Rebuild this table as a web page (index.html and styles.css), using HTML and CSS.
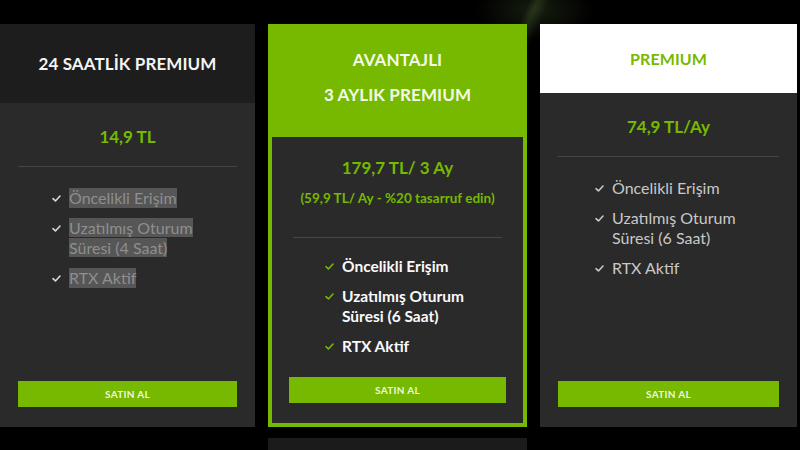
FILE: index.html
```html
<!DOCTYPE html>
<html lang="tr">
<head>
<meta charset="utf-8">
<title>Premium Planlar</title>
<link rel="stylesheet" href="styles.css">
</head>
<body>
<main class="plans">
  <section class="card card-basic">
    <header class="card-head head-dark">
      <h2 class="title">24 SAATLİK PREMIUM</h2>
    </header>
    <div class="card-body">
      <p class="price">14,9 TL</p>
      <hr class="divider">
      <ul class="features features-muted">
        <li><svg class="check" viewBox="0 0 10 8"><path d="M1 4.2 L3.8 6.8 L9 1.2"/></svg><span class="hl">Öncelikli Erişim</span></li>
        <li><svg class="check" viewBox="0 0 10 8"><path d="M1 4.2 L3.8 6.8 L9 1.2"/></svg><span class="txt"><span class="hl">Uzatılmış Oturum Süresi (4 Saat)</span></span></li>
        <li><svg class="check" viewBox="0 0 10 8"><path d="M1 4.2 L3.8 6.8 L9 1.2"/></svg><span class="hl">RTX Aktif</span></li>
      </ul>
      <a class="buy" href="#">SATIN AL</a>
    </div>
  </section>

  <div class="featured-col">
    <section class="card card-featured">
      <header class="card-head head-green">
        <h2 class="title">AVANTAJLI</h2>
        <h2 class="title">3 AYLIK PREMIUM</h2>
      </header>
      <div class="card-body inner">
        <p class="price">179,7 TL/ 3 Ay</p>
        <p class="saving">(59,9 TL/ Ay - %20 tasarruf edin)</p>
        <hr class="divider">
        <ul class="features features-strong">
          <li><svg class="check" viewBox="0 0 10 8"><path d="M1 4.2 L3.8 6.8 L9 1.2"/></svg><span>Öncelikli Erişim</span></li>
          <li><svg class="check" viewBox="0 0 10 8"><path d="M1 4.2 L3.8 6.8 L9 1.2"/></svg><span>Uzatılmış Oturum Süresi (6 Saat)</span></li>
          <li><svg class="check" viewBox="0 0 10 8"><path d="M1 4.2 L3.8 6.8 L9 1.2"/></svg><span>RTX Aktif</span></li>
        </ul>
        <a class="buy" href="#">SATIN AL</a>
      </div>
    </section>
    <div class="next-block"></div>
  </div>

  <section class="card card-premium">
    <header class="card-head head-white">
      <h2 class="title">PREMIUM</h2>
    </header>
    <div class="card-body">
      <p class="price">74,9 TL/Ay</p>
      <hr class="divider">
      <ul class="features features-light">
        <li><svg class="check" viewBox="0 0 10 8"><path d="M1 4.2 L3.8 6.8 L9 1.2"/></svg><span>Öncelikli Erişim</span></li>
        <li><svg class="check" viewBox="0 0 10 8"><path d="M1 4.2 L3.8 6.8 L9 1.2"/></svg><span>Uzatılmış Oturum Süresi (6 Saat)</span></li>
        <li><svg class="check" viewBox="0 0 10 8"><path d="M1 4.2 L3.8 6.8 L9 1.2"/></svg><span>RTX Aktif</span></li>
      </ul>
      <a class="buy" href="#">SATIN AL</a>
    </div>
  </section>
</main>
</body>
</html>
```

FILE: styles.css
```css
* { box-sizing: border-box; }

html, body {
  margin: 0;
  padding: 0;
  width: 800px;
  height: 450px;
  overflow: hidden;
}

body {
  background-color: #000;
  background-image:
    linear-gradient(115deg, transparent 0 64%, rgba(120,160,90,0.18) 65%, transparent 66.5%),
    radial-gradient(ellipse 60px 30px at 535px 10px, rgba(90,120,60,0.25), transparent);
  background-repeat: no-repeat;
  background-size: 800px 60px, 800px 450px;
  font-family: "Lato", "Noto Sans", sans-serif;
  color: #fff;
}

.plans {
  display: flex;
  align-items: flex-start;
  gap: 13px;
  padding-top: 24px;
}

.card {
  display: flex;
  flex-direction: column;
  height: 403px;
}

.card-basic { width: 255px; background: #2a2a2a; }
.featured-col { width: 259px; display: flex; flex-direction: column; }
.card-featured { background: #76b900; padding: 0 4px 4px; }
.card-premium { width: 257px; background: #2a2a2a; }

.card-head {
  display: flex;
  flex-direction: column;
  align-items: center;
  justify-content: center;
}

.title {
  margin: 0;
  font-size: 17px;
  font-weight: 700;
  letter-spacing: 0.1px;
}

.head-dark { height: 79px; background: #1d1d1d; color: #f4f4f4; }
.head-white { height: 69px; background: #fff; }
.head-white .title { color: #76b900; font-size: 16px; }
.head-green {
  height: 113px;
  justify-content: flex-start;
  padding-top: 18px;
  color: #f3f9e6;
}
.head-green .title { line-height: 35px; }

.card-body {
  flex: 1;
  display: flex;
  flex-direction: column;
  padding: 22px 18px 20px;
  background: #2a2a2a;
}

.card-body.inner { padding: 19px 17px 20px; }

.price {
  margin: 0;
  text-align: center;
  color: #76b900;
  font-size: 17px;
  font-weight: 700;
  line-height: 24px;
}

.saving {
  margin: 9px 0 0;
  text-align: center;
  color: #76b900;
  font-size: 13.5px;
  font-weight: 700;
  line-height: 18px;
}

.divider {
  border: 0;
  height: 1px;
  background: #464646;
  margin: 17px 0 0;
}

.inner .divider { margin: 30px 4px 0 4px; }

.features {
  list-style: none;
  margin: 21px 0 0;
  padding: 0 26px 0 34px;
  font-size: 16px;
  line-height: 20px;
}

.inner .features { margin-top: 18px; padding-left: 36px; }
.card-premium .features { padding-left: 37px; }

.features li {
  display: flex;
  align-items: flex-start;
  margin-bottom: 10px;
}

.check {
  flex: none;
  width: 9px;
  height: 7px;
  margin: 7px 8px 0 0;
  fill: none;
  stroke-width: 1.8;
  stroke-linecap: round;
  stroke-linejoin: round;
}

.features-muted .check { stroke: #d8d8d8; }
.features-light .check { stroke: #c9c9c9; }
.features-strong .check { stroke: #76b900; }

.features-muted { color: #8e8e8e; }
.hl { background: #565656; }

.features-light { color: #c8c8c8; }
.features-strong { color: #fafafa; font-weight: 700; font-size: 15.5px; }

.buy {
  margin-top: auto;
  display: flex;
  align-items: center;
  justify-content: center;
  height: 26px;
  background: #76b900;
  color: #eef7dc;
  font-size: 10px;
  font-weight: 700;
  letter-spacing: 0.3px;
  text-decoration: none;
}

.next-block {
  margin-top: 11px;
  height: 20px;
  background: #1b1b1b;
}
```
